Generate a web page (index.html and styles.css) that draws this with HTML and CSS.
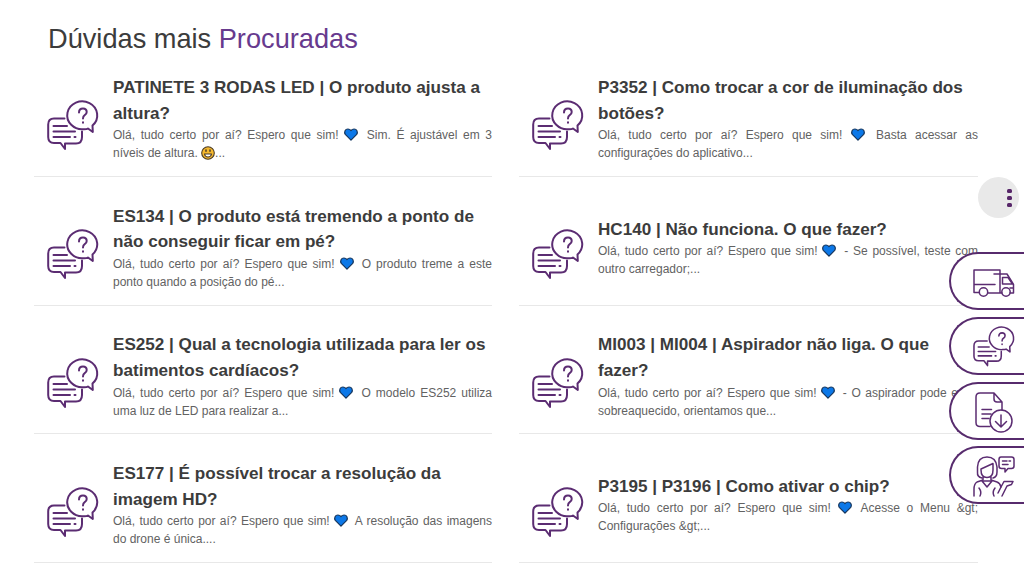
FILE: index.html
```html
<!DOCTYPE html>
<html lang="pt-BR">
  <head>
    <meta charset="UTF-8" />
    <meta name="viewport" content="width=device-width, initial-scale=1.0" />
    <title>Dúvidas mais Procuradas</title>
    <link rel="stylesheet" href="styles.css">
  </head>
  <body>
    <svg class="sprite" aria-hidden="true">
      <symbol id="icon-faq" viewBox="0 0 52 52">
        <path d="M17.500 18.500H7Q1.200 18.500 1.200 24.500V37Q1.200 43 7 43H13.500L18 49V43.500H29Q35 43.500 35 37V31.500" />
        <path d="M6.500 26H20M6.500 31.500H28M6.500 37H23M27.500 37H28.500" />
        <path d="M45.500 25.500A15 14 0 1 0 37 29.200Q40 29.200 41 28.500L45.800 32Z" />
        <path d="M32 12.500Q32 8.500 36 8.500Q39.700 8.500 39.700 12Q39.700 14 37.700 15.200Q36 16.200 36 18.500M36 22.200V22.800" />
      </symbol>
      <symbol id="icon-heart" viewBox="0 0 14 13">
        <path d="M7 12.200 1.300 6.400C-.2 3.800 1.300 1 3.900 1 5.300 1 6.300 1.600 7 2.600 7.700 1.600 8.700 1 10.100 1c2.600 0 4.100 2.800 2.600 5.400Z" />
      </symbol>
    </svg>

    <main class="faq">
      <h1 class="faq-title">Dúvidas mais <span>Procuradas</span></h1>

      <div class="faq-grid">
        <article class="faq-item">
          <svg class="faq-icon"><use href="#icon-faq" /></svg>
          <div class="faq-content">
            <h2>PATINETE 3 RODAS LED | O produto ajusta a altura?</h2>
            <p>Olá, tudo certo por aí? Espero que sim! <svg class="heart"><use href="#icon-heart" /></svg> Sim. É ajustável em 3 níveis de altura. <svg class="smile" viewBox="0 0 14 14"><circle cx="7" cy="7" r="6.300" /><path d="M3.500 8H10.500Q10 11 7 11T3.500 8Z" /><path class="eyes" d="M5 4V5.200M9 4V5.200" /></svg>...</p>
          </div>
        </article>

        <article class="faq-item">
          <svg class="faq-icon"><use href="#icon-faq" /></svg>
          <div class="faq-content">
            <h2>P3352 | Como trocar a cor de iluminação dos botões?</h2>
            <p>Olá, tudo certo por aí? Espero que sim! <svg class="heart"><use href="#icon-heart" /></svg> Basta acessar as configurações do aplicativo...</p>
          </div>
        </article>

        <article class="faq-item">
          <svg class="faq-icon"><use href="#icon-faq" /></svg>
          <div class="faq-content">
            <h2>ES134 | O produto está tremendo a ponto de não conseguir ficar em pé?</h2>
            <p>Olá, tudo certo por aí? Espero que sim! <svg class="heart"><use href="#icon-heart" /></svg> O produto treme a este ponto quando a posição do pé...</p>
          </div>
        </article>

        <article class="faq-item">
          <svg class="faq-icon"><use href="#icon-faq" /></svg>
          <div class="faq-content">
            <h2>HC140 | Não funciona. O que fazer?</h2>
            <p>Olá, tudo certo por aí? Espero que sim! <svg class="heart"><use href="#icon-heart" /></svg> - Se possível, teste com outro carregador;...</p>
          </div>
        </article>

        <article class="faq-item">
          <svg class="faq-icon"><use href="#icon-faq" /></svg>
          <div class="faq-content">
            <h2>ES252 | Qual a tecnologia utilizada para ler os batimentos cardíacos?</h2>
            <p>Olá, tudo certo por aí? Espero que sim! <svg class="heart"><use href="#icon-heart" /></svg> O modelo ES252 utiliza uma luz de LED para realizar a...</p>
          </div>
        </article>

        <article class="faq-item">
          <svg class="faq-icon"><use href="#icon-faq" /></svg>
          <div class="faq-content">
            <h2>MI003 | MI004 | Aspirador não liga. O que fazer?</h2>
            <p>Olá, tudo certo por aí? Espero que sim! <svg class="heart"><use href="#icon-heart" /></svg> - O aspirador pode estar sobreaquecido, orientamos que...</p>
          </div>
        </article>

        <article class="faq-item">
          <svg class="faq-icon"><use href="#icon-faq" /></svg>
          <div class="faq-content">
            <h2>ES177 | É possível trocar a resolução da imagem HD?</h2>
            <p>Olá, tudo certo por aí? Espero que sim! <svg class="heart"><use href="#icon-heart" /></svg> A resolução das imagens do drone é única....</p>
          </div>
        </article>

        <article class="faq-item">
          <svg class="faq-icon"><use href="#icon-faq" /></svg>
          <div class="faq-content">
            <h2>P3195 | P3196 | Como ativar o chip?</h2>
            <p>Olá, tudo certo por aí? Espero que sim! <svg class="heart"><use href="#icon-heart" /></svg> Acesse o Menu &amp;gt; Configurações &amp;gt;...</p>
          </div>
        </article>
      </div>
    </main>

    <nav class="side-menu">
      <button class="side-toggle" type="button" aria-label="Menu"><i></i><i></i><i></i></button>
      <a class="side-link" href="#" aria-label="Rastrear pedido">
        <svg viewBox="0 0 42 42">
          <path d="M6 31.500H1V9H27V32H15M20 32H29M1 23.500H22M21 13H34L39 21L40.500 23.500V32H37" />
          <path d="M29.500 16.500V23H39.500L35 16.500ZM37 27H40" />
          <circle cx="10.500" cy="31" r="4.200" /><circle cx="33" cy="31" r="4.200" />
        </svg>
      </a>
      <a class="side-link" href="#" aria-label="Dúvidas">
        <svg viewBox="0 0 52 52" class="side-faq"><use href="#icon-faq" /></svg>
      </a>
      <a class="side-link" href="#" aria-label="Downloads">
        <svg viewBox="0 0 42 42">
          <path d="M17 35.500H7Q3 35.500 3 31.500V6Q3 2 7 2H21L29 11V19M21 2V8Q21 11 24 11H29M9 18.500H18.500M9 23H18M9 27.500H16" />
          <circle cx="28" cy="30" r="11" /><path d="M28 24V35.500M22.500 30.500L28 36L33.500 30.500" />
        </svg>
      </a>
      <a class="side-link" href="#" aria-label="Atendimento">
        <svg viewBox="0 0 42 42">
          <path d="M9 23Q4 22 4.500 17V12Q5 2 14 2Q23 2 24 12V17Q24 22 20 23" />
          <path d="M8 14L20 8.500V15Q20 22.500 14 22.500Q8 22.500 8 15ZM10 22V25L4 27Q1 29 1 34V41M18 22V25L24 27Q27 28 28 32L31 26.500H40L38.500 29.500L34 31L29 41" />
          <path d="M9 26H19L14 32ZM6 33Q9 37 7 41M22 33Q19 37 21 41M28 32L25 38" />
          <path d="M28 2H38.500Q41 2 41 4.500V11Q41 13.500 38.500 13.500H35L32 17V13.500H28.500Q26 13.500 26 11V4.500Q26 2 28 2ZM29.500 6H34M36 6H37.500M29.500 9.500H35" />
        </svg>
      </a>
    </nav>
  </body>
</html>
```
FILE: styles.css
```css
* {
  box-sizing: border-box;
}
body {
  margin: 0;
  height: 576px;
  overflow: hidden;
  background: #ffffff;
  font-family: "Liberation Sans", Arial, sans-serif;
  color: #3c3c3c;
}
svg {
  overflow: visible;
  fill: none;
  stroke: #5b2c72;
  stroke-width: 2;
  stroke-linecap: round;
  stroke-linejoin: round;
}
symbol {
  overflow: visible;
}
.sprite {
  display: none;
}
.faq {
  padding: 23px 46px 0 34px;
}
.faq-title {
  margin: 0;
  padding-left: 14px;
  font-size: 27.2px;
  line-height: 32px;
  font-weight: normal;
}
.faq-title span {
  color: #673a8e;
}
.faq-grid {
  display: grid;
  grid-template-columns: 458px 459px;
  column-gap: 27px;
  grid-auto-rows: 128.8px;
  margin-top: -7px;
}
.faq-item {
  display: flex;
  align-items: center;
  padding: 13px 0 0 13px;
  border-bottom: 1px solid #e8e8e8;
}
.faq-icon {
  flex: none;
  width: 52px;
  height: 52px;
  margin: 16px 14px 0 0;
}
.faq-content {
  flex: 1;
}
.faq-content h2 {
  margin: 0 0 -0.4px;
  font-size: 17.1px;
  line-height: 25.7px;
  font-weight: bold;
}
.faq-content p {
  margin: 0;
  font-size: 12px;
  line-height: 18px;
  color: #626262;
  text-align: justify;
}
.heart {
  width: 14px;
  height: 13px;
  margin-right: 3px;
  vertical-align: -2px;
  fill: #0c78e8;
  stroke: #17365c;
  stroke-width: 1.2;
}
.smile {
  width: 14px;
  height: 14px;
  vertical-align: -3px;
  fill: #f5b82e;
  stroke: #493b28;
  stroke-width: 1.1;
}
.smile path {
  fill: #ffffff;
}
.smile .eyes {
  stroke-width: 1.5;
}
.side-menu {
  position: fixed;
  top: 177px;
  right: 0;
  width: 75px;
  display: flex;
  flex-direction: column;
  gap: 6.8px;
}
.side-toggle {
  display: flex;
  flex-direction: column;
  align-items: flex-end;
  justify-content: center;
  gap: 3px;
  width: 41px;
  height: 41px;
  margin: 0 0 27.2px 29px;
  padding: 0 7px;
  border: none;
  border-radius: 50%;
  background: #e9e9e9;
}
.side-toggle i {
  width: 5px;
  height: 4px;
  border-radius: 1.5px;
  background: #572669;
}
.side-link {
  display: flex;
  align-items: center;
  height: 58px;
  padding-left: 22px;
  border: 2px solid #572b6d;
  border-right: none;
  border-radius: 29px 0 0 29px;
  background: #ffffff;
}
.side-link svg {
  flex: none;
  width: 42px;
  height: 42px;
  margin-top: 2px;
  stroke-width: 1.5;
}
.side-link .side-faq {
  stroke-width: 1.9;
}
```
